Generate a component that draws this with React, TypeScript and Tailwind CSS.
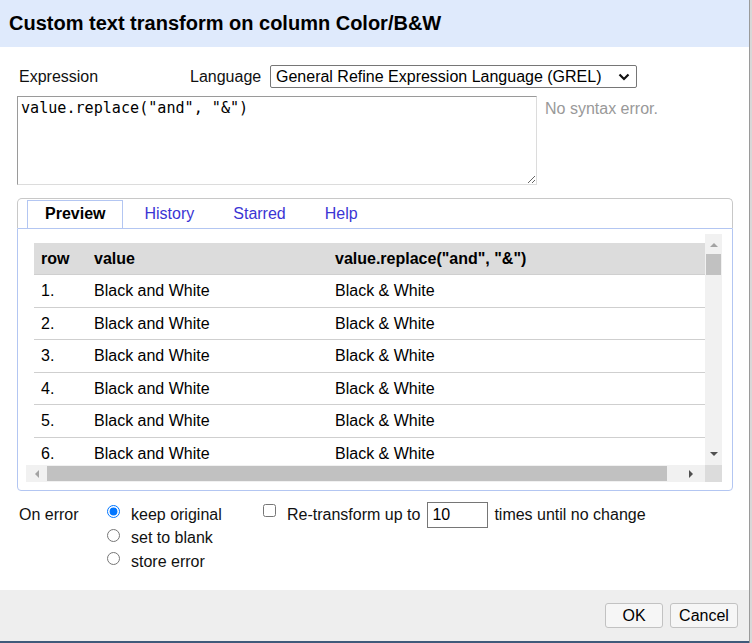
import React from 'react';

const rows = [1, 2, 3, 4, 5, 6];

function Tri({ dir, color }: { dir: 'up' | 'down' | 'left' | 'right'; color: string }) {
  const pts = {
    up: '0,5 4,1 8,5',
    down: '0,1 8,1 4,5',
    left: '5,0 5,8 1,4',
    right: '1,0 1,8 5,4',
  }[dir];
  const vert = dir === 'up' || dir === 'down';
  return (
    <svg width={vert ? 8 : 6} height={vert ? 6 : 8} viewBox={vert ? '0 0 8 6' : '0 0 6 8'}>
      <polygon points={pts} fill={color} />
    </svg>
  );
}

export default function App() {
  return (
    <div className="flex h-[643px] w-[752px] bg-[#d6d6d6] font-['Liberation_Sans',Arial,sans-serif] text-[16px] text-[#111]">
      <div className="flex h-full w-[749px] flex-col bg-white">
        {/* Title bar */}
        <div className="flex h-[47px] shrink-0 items-center bg-[#dfeafc] pb-[1px] pl-[9px]">
          <h1 className="text-[20px] font-bold text-black">Custom text transform on column Color/B&amp;W</h1>
        </div>

        {/* Body */}
        <div className="flex flex-1 flex-col pl-[17px] pt-[18px]">
          <div className="flex h-[23px] items-center">
            <span className="w-[173px] pl-[2px]">Expression</span>
            <span className="w-[80px]">Language</span>
            <div className="flex h-[23px] w-[367px] items-center justify-between rounded-[2px] border border-[#767676] pl-[5px] pr-[6px] text-black">
              <span>General Refine Expression Language (GREL)</span>
              <svg width="12" height="8" viewBox="0 0 12 8">
                <path d="M1.5 1.5 L6 6 L10.5 1.5" fill="none" stroke="#111" strokeWidth="2.2" />
              </svg>
            </div>
          </div>

          <div className="mt-[8px] flex items-start">
            <textarea
              defaultValue={'value.replace("and", "&")'}
              spellCheck={false}
              className="h-[89px] w-[520px] border border-t-[#9a9a9a] border-l-[#9a9a9a] border-r-[#dcdcdc] border-b-[#dcdcdc] px-[3px] py-[2px] font-['DejaVu_Sans_Mono','Liberation_Mono',monospace] text-[15.1px] leading-[19px] text-black outline-none"
            />
            <span className="ml-[8px] mt-[1px] text-[#999]">No syntax error.</span>
          </div>

          {/* Tabs */}
          <div className="mt-[13px] flex h-[293px] w-[716px] flex-col">
            <div className="flex h-[30px] shrink-0 items-end gap-[3px] rounded-t-[5px] border border-b-0 border-[#c8c8c8] pl-[9px]">
              <div className="-mb-px flex h-[29px] items-center border border-b-0 border-[#b3c6f2] bg-white px-[17px] pb-[2px] font-bold text-black">
                Preview
              </div>
              {['History', 'Starred', 'Help'].map((t) => (
                <div key={t} className="-mb-px flex h-[29px] items-center border border-transparent px-[17px] pb-[2px] text-[#3b35d4]">
                  {t}
                </div>
              ))}
            </div>
            <div className="flex-1 rounded-b-[4px] border border-[#b3c6f2] pb-[8px] pl-[8px] pr-[10px] pt-[5px]">
              <div className="grid h-[248px] w-[696px] grid-cols-[679px_17px] grid-rows-[231px_17px]">
                <div className="overflow-hidden pl-[8px] pt-[9px]">
                  <div className="w-[700px]">
                    <div className="flex h-[32px] items-center border-b border-[#cfcfcf] bg-[#dcdcdc] pt-[1px] font-bold text-black">
                      <span className="w-[53px] pl-[7px]">row</span>
                      <span className="w-[241px] pl-[7px]">value</span>
                      <span className="pl-[7px]">value.replace("and", "&amp;")</span>
                    </div>
                    {rows.map((r) => (
                      <div key={r} className="flex h-[32.5px] items-center border-b border-[#cfcfcf] pt-[1px] leading-[20px] text-black">
                        <span className="w-[53px] pl-[7px]">{r}.</span>
                        <span className="w-[241px] pl-[7px]">Black and White</span>
                        <span className="pl-[7px]">Black &amp; White</span>
                      </div>
                    ))}
                  </div>
                </div>
                {/* vertical scrollbar */}
                <div className="flex flex-col items-center bg-[#f1f1f1]">
                  <div className="flex h-[20px] w-full items-center justify-center pt-[1px]">
                    <Tri dir="up" color="#a3a3a3" />
                  </div>
                  <div className="h-[21px] w-[15px] bg-[#c1c1c1]" />
                  <div className="flex-1" />
                  <div className="flex h-[20px] w-full items-center justify-center pb-[2px]">
                    <Tri dir="down" color="#505050" />
                  </div>
                </div>
                {/* horizontal scrollbar */}
                <div className="flex items-center bg-[#f1f1f1]">
                  <div className="flex h-full w-[21px] items-center justify-center">
                    <Tri dir="left" color="#a3a3a3" />
                  </div>
                  <div className="h-[15px] w-[620px] bg-[#c1c1c1]" />
                  <div className="flex-1" />
                  <div className="flex h-full w-[24px] items-center justify-center pr-[4px]">
                    <Tri dir="right" color="#505050" />
                  </div>
                </div>
                <div className="bg-[#dcdcdc]" />
              </div>
            </div>
          </div>

          {/* On error */}
          <div className="mt-[12px] flex items-start leading-[20px]">
            <span className="flex h-[23.5px] w-[90px] items-center pl-[2px]">On error</span>
            <div className="flex w-[156px] flex-col">
              {['keep original', 'set to blank', 'store error'].map((l, i) => (
                <label key={l} className="flex h-[23.5px] items-center">
                  <input type="radio" name="onerror" defaultChecked={i === 0} className="m-0 mb-[6px] mr-[11px] h-[13px] w-[13px] accent-[#0075ff]" />
                  <span>{l}</span>
                </label>
              ))}
            </div>
            <div className="flex h-[23.5px] items-center">
              <input type="checkbox" className="m-0 mb-[8px] mr-[11px] h-[13px] w-[13px]" />
              <span>Re-transform up to</span>
              <input
                type="text"
                defaultValue="10"
                className="ml-[7px] mr-[6px] h-[26px] w-[61px] border border-[#767676] px-[4px] text-black outline-none"
              />
              <span>times until no change</span>
            </div>
          </div>
        </div>

        {/* Footer */}
        <div className="flex h-[53px] shrink-0 items-start justify-end gap-[7px] border-b-2 border-[#3f5a7a] bg-[#eeeeee] pr-[11px] pt-[13px]">
          <button className="h-[25px] w-[58px] rounded-[3px] border border-[#c2c2c2] bg-[#f6f6f6] text-black">OK</button>
          <button className="h-[25px] w-[68px] rounded-[3px] border border-[#c2c2c2] bg-[#f6f6f6] text-black">Cancel</button>
        </div>
      </div>
      <div className="flex-1 border-l border-[#9a9a9a] bg-[#d8d8d8]" />
    </div>
  );
}
